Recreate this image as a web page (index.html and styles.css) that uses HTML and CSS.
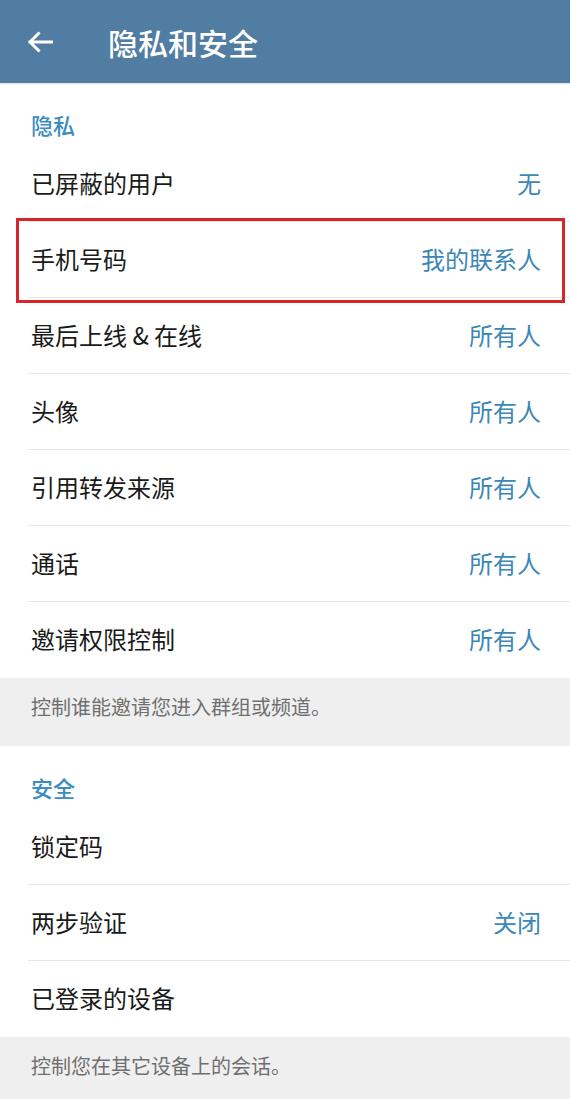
FILE: index.html
```html
<!DOCTYPE html>
<html lang="zh-CN">
<head>
  <meta charset="UTF-8" />
  <title>隐私和安全</title>
  <link rel="stylesheet" href="styles.css">
</head>
<body>

  <header class="topbar">
    <svg class="back" viewBox="0 0 26 22" width="26" height="22">
      <path d="M25 11H3M11.5 2.5L3 11l8.5 8.5" fill="none" stroke="#fff" stroke-width="3" stroke-linecap="square"/>
    </svg>
    <h1>隐私和安全</h1>
  </header>

  <section class="group">
    <h2>隐私</h2>
    <div class="row"><span>已屏蔽的用户</span><span class="value">无</span></div>
    <div class="row marked"><span>手机号码</span><span class="value">我的联系人</span></div>
    <div class="row"><span>最后上线 &amp; 在线</span><span class="value">所有人</span></div>
    <div class="row"><span>头像</span><span class="value">所有人</span></div>
    <div class="row"><span>引用转发来源</span><span class="value">所有人</span></div>
    <div class="row"><span>通话</span><span class="value">所有人</span></div>
    <div class="row"><span>邀请权限控制</span><span class="value">所有人</span></div>
  </section>
  <p class="note">控制谁能邀请您进入群组或频道。</p>

  <section class="group">
    <h2>安全</h2>
    <div class="row"><span>锁定码</span></div>
    <div class="row"><span>两步验证</span><span class="value">关闭</span></div>
    <div class="row"><span>已登录的设备</span></div>
  </section>
  <p class="note">控制您在其它设备上的会话。</p>

</body>
</html>
```

FILE: styles.css
```css
:root {
  --bar: #517da2;
  --accent: #3a8cc2;
  --value: #3b87b6;
  --text: #1a1a1a;
  --line: #e6e6e6;
  --gray: #efefef;
  --hint: #6f6f6f;
}

* {
  box-sizing: border-box;
}

body {
  margin: 0;
  width: 570px;
  font-family: "Noto Sans CJK SC", "Noto Sans", sans-serif;
  background: #fff;
  color: var(--text);
}

.topbar {
  height: 83px;
  display: flex;
  align-items: center;
  padding-left: 27px;
  background: var(--bar);
  box-shadow: 0 1px 2px rgba(0,0,0,0.15);
  position: relative;
}

.back {
  display: block;
  margin-top: 1px;
}

.topbar h1 {
  margin: 0 0 0 55px;
  font-size: 30px;
  font-weight: 500;
  color: #fff;
  line-height: 36px;
}

.group h2 {
  margin: 0;
  padding: 28px 0 0 31px;
  height: 63px;
  font-size: 22px;
  font-weight: 500;
  line-height: 26px;
  color: var(--accent);
}

/* divider is inset from the left */
.row {
  position: relative;
  height: 76px;
  display: flex;
  align-items: center;
  justify-content: space-between;
  padding: 0 29px 3px 31px;
  font-size: 24px;
  background: linear-gradient(var(--line), var(--line)) 28px 100% / 100% 1px no-repeat;
}

.row:last-child {
  background: none;
}

.value {
  color: var(--value);
}

.marked::after {
  content: "";
  position: absolute;
  left: 16px;
  top: -4px;
  width: 543px;
  height: 79px;
  border: 3px solid #d6262c;
}

.note {
  margin: 0;
  height: 68px;
  padding: 15px 31px 0;
  background: var(--gray);
  font-size: 20px;
  line-height: 28px;
  color: var(--hint);
}
```
